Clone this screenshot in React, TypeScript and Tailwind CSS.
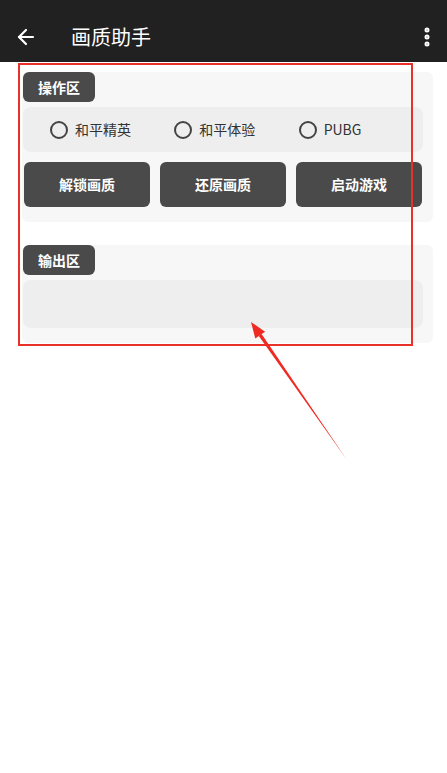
import { ArrowLeft, EllipsisVertical } from "lucide-react";

const games = ["和平精英", "和平体验", "PUBG"];
const actions = ["解锁画质", "还原画质", "启动游戏"];

const Badge = ({ label }: { label: string }) => (
  <div className="-mt-[7px] w-[72px] h-[30px] rounded-[6px] bg-[#4a4a4a] flex items-center justify-center text-white font-bold text-[14px]">
    {label}
  </div>
);

export default function App() {
  return (
    <div
      className="relative min-h-screen bg-white"
      style={{ fontFamily: '"Noto Sans CJK SC", "Noto Sans", sans-serif' }}
    >
      <header className="h-[62px] pt-[11px] bg-[#212121] flex items-center text-white">
        <ArrowLeft className="ml-[14px] w-[24px] h-[24px]" strokeWidth={2.2} />
        <h1 className="ml-[33px] text-[20px] leading-none">画质助手</h1>
        <EllipsisVertical className="ml-auto mr-[8px] w-[24px] h-[24px]" strokeWidth={3} />
      </header>

      {/* 操作区 */}
      <section className="ml-[22px] w-[411px] mt-[17px] bg-[#f7f7f7] rounded-[6px] pl-[1px] pr-[10px] pb-[15px]">
        <Badge label="操作区" />
        <div className="mt-[5px] h-[45px] bg-[#eeeeee] rounded-[8px] flex items-center pl-[27px]">
          {games.map((g, i) => (
            <label key={i} className="w-[126px] flex items-center gap-[7px] text-[14px] text-[#333333]">
              <span className="w-[18px] h-[18px] rounded-full border-2 border-[#444444]" />
              {g}
            </label>
          ))}
        </div>
        <div className="mt-[10px] grid grid-cols-3 gap-[10px] px-[1px]">
          {actions.map((a, i) => (
            <button
              key={i}
              className="h-[45px] rounded-[6px] bg-[#4a4a4a] text-white font-bold text-[14px]"
            >
              {a}
            </button>
          ))}
        </div>
      </section>

      {/* 输出区 */}
      <section className="ml-[22px] w-[411px] mt-[30px] bg-[#f7f7f7] rounded-[6px] pl-[1px] pr-[10px] pb-[15px]">
        <Badge label="输出区" />
        <div className="mt-[5px] h-[48px] bg-[#eeeeee] rounded-[8px]" />
      </section>

      {/* annotation */}
      <div className="absolute left-[18px] top-[63px] w-[395px] h-[283px] border-2 border-[#e8312a] pointer-events-none" />
      <svg className="absolute left-0 top-0 pointer-events-none" width="447" height="773">
        <polygon points="261.6,334.1 258.8,336.1 347,460" fill="#ee2a22" />
        <polygon points="251,322 265.1,331.7 255.3,338.5" fill="#ee2a22" />
      </svg>
    </div>
  );
}
